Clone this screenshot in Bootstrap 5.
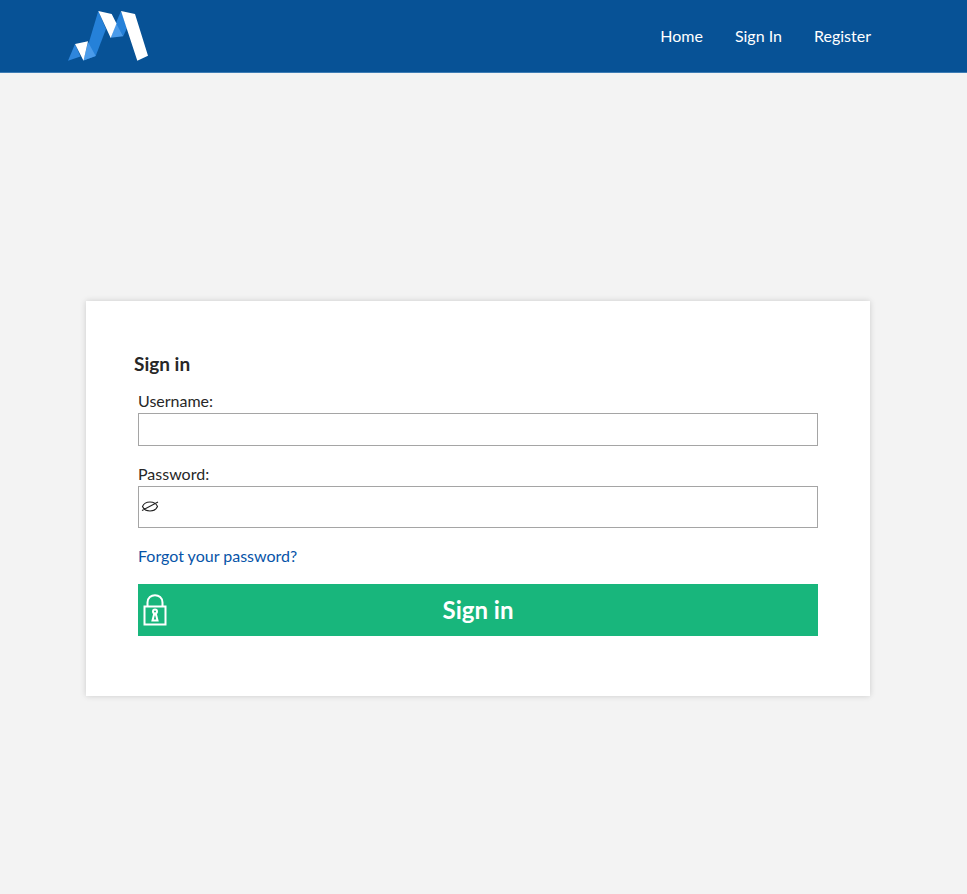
<!DOCTYPE html>
<html lang="en">
<head>
<meta charset="utf-8">
<meta name="viewport" content="width=device-width, initial-scale=1">
<title>Sign in</title>
<link href="https://cdn.jsdelivr.net/npm/bootstrap@5.3.0/dist/css/bootstrap.min.css" rel="stylesheet">
<style>
body { font-family: Lato, "Liberation Sans", sans-serif; font-size: 16px; line-height: 24px; color: #272727; background: #f3f3f3; }
.site-header { background: #075296; border-bottom: 1px solid #3d7cb4; min-height: 73px; padding: 0 80px 0 68px; }
.site-header .nav-link { color: #fff; padding: 8px 16px; }
.signin-area { padding: 228px 97px 48px 86px; }
.signin-card { border: 0; border-radius: 0; padding: 48px 48px 60px; box-shadow: 0 0 6px rgba(0, 0, 0, .16); }
.signin-title { font-size: 19px; font-weight: 700; line-height: 30px; margin-bottom: 10px; }
.form-control { border: 1px solid #a5a5a5; border-radius: 0; padding: 0 8px; height: 33px; }
.form-control.secret-input { height: 42px; padding-left: 32px; }
.reveal-btn { width: 24px; color: #222; }
.forgot-link { color: #0754a8; }
.submit-btn { background: #18b67c; color: #fff; border: 0; border-radius: 0; height: 52px; padding: 0; font-size: 24px; font-weight: 700; }
.submit-btn:hover { background: #149c6a; color: #fff; }
.lock-icon { left: 4px; }
</style>
<script src="https://cdn.jsdelivr.net/npm/bootstrap@5.3.0/dist/js/bootstrap.bundle.min.js" defer></script>
</head>
<body>
<header class="site-header d-flex align-items-center justify-content-between">
  <a href="#" class="d-flex" aria-label="Homepage">
    <svg width="80" height="50" viewBox="0 0 80 50" aria-hidden="true">
      <path fill="#2581d9" d="M30.300 0 38 18 27.700 45 15.500 49.500Z"/>
      <path fill="#2e86dc" d="M0 49.700 7 33 12.500 45.500Z"/>
      <path fill="#2581d9" d="M53 0 59 17 55.300 25 47.500 13Z"/>
      <path fill="#4a9bea" d="M15.500 49.500 20 31 27.700 45ZM42.700 26.700 48 12.300 55.300 25.300Z"/>
      <path fill="#fff" d="M7 33 20 30.300 15.500 49.700ZM30.300 0 43.700 3 48.500 12.500 42.700 27ZM53 0 67 3 80 44.700 69.300 49.700Z"/>
    </svg>
  </a>
  <nav class="nav" aria-label="Main">
    <a class="nav-link" href="#">Home</a>
    <a class="nav-link" href="#">Sign In</a>
    <a class="nav-link" href="#">Register</a>
  </nav>
</header>
<main class="signin-area">
  <section class="card signin-card">
    <h1 class="signin-title">Sign in</h1>
    <form class="px-1">
      <div class="mb-3">
        <label class="d-block" for="username">Username:</label>
        <input class="form-control" type="text" id="username" autocomplete="username">
      </div>
      <div class="mb-3">
        <label class="d-block" for="password">Password:</label>
        <div class="position-relative">
          <input class="form-control secret-input" type="password" id="password" autocomplete="current-password">
          <button type="button" class="reveal-btn btn border-0 p-0 position-absolute top-0 start-0 h-100 d-flex align-items-center justify-content-center" aria-label="Show password">
            <svg width="18" height="12" viewBox="0 0 18 12" fill="none" stroke="currentColor" stroke-width="1.1" aria-hidden="true"><path d="M1.500 5.500C4-.5 14-.5 16.500 5.500 14 11.500 4 11.500 1.500 5.500ZM1 9.500 17 1"/></svg>
          </button>
        </div>
      </div>
      <div class="mb-3"><a class="forgot-link text-decoration-none" href="#">Forgot your password?</a></div>
      <button type="submit" class="btn submit-btn w-100 d-flex align-items-center justify-content-center position-relative">
        <svg class="lock-icon position-absolute" width="26" height="34" viewBox="0 0 26 34" fill="none" stroke="#fff" stroke-width="2" aria-hidden="true"><path d="M2.500 13.500H23.500V31.500H2.500ZM5.500 13.500V9.500C5.500-.3 20.500-.3 20.500 9.500V13.500"/><circle cx="13" cy="18.500" r="2"/><path d="M12 21.500H14L15.500 27.500H10.500Z"/></svg>
        Sign in
      </button>
    </form>
  </section>
</main>
</body>
</html>
